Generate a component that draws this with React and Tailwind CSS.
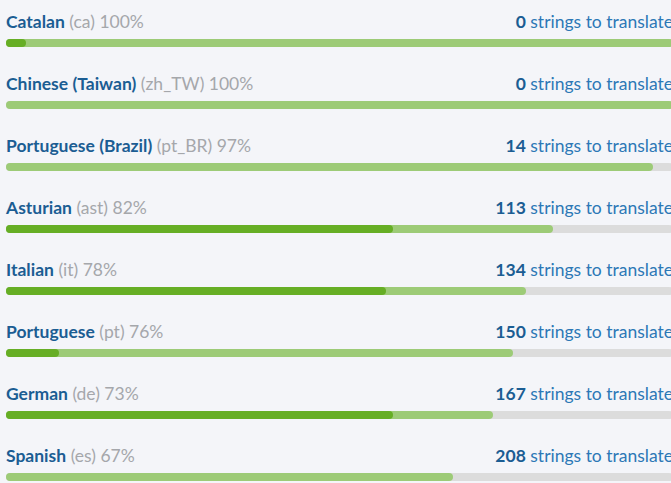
import React from "react";

const languages = [
  { name: "Catalan", code: "ca", percent: 100, left: 0, reviewed: 3 },
  { name: "Chinese (Taiwan)", code: "zh_TW", percent: 100, left: 0, reviewed: 0 },
  { name: "Portuguese (Brazil)", code: "pt_BR", percent: 97, left: 14, reviewed: 0 },
  { name: "Asturian", code: "ast", percent: 82, left: 113, reviewed: 58 },
  { name: "Italian", code: "it", percent: 78, left: 134, reviewed: 57 },
  { name: "Portuguese", code: "pt", percent: 76, left: 150, reviewed: 8 },
  { name: "German", code: "de", percent: 73, left: 167, reviewed: 58 },
  { name: "Spanish", code: "es", percent: 67, left: 208, reviewed: 0 },
];

const LanguageRow = ({ lang }) => {
  const innerWidth = lang.percent ? (lang.reviewed / lang.percent) * 100 : 0;
  return (
    <div className="pt-[10px] pb-[15px]">
      <div className="flex items-baseline justify-between text-[17.5px] leading-6">
        <div>
          <span className="font-bold text-[#1b5d93]">{lang.name}</span>{" "}
          <span className="text-[#a5a7ab]">
            ({lang.code}) {lang.percent}%
          </span>
        </div>
        <div className="text-[#2c78b6] whitespace-nowrap">
          <span className="font-bold text-[#1b5d93]">{lang.left}</span> strings to translate
        </div>
      </div>
      <div className="mt-[5px] h-2 rounded-sm bg-[#dcdcdc]">
        <div className="h-2 rounded-sm bg-[#9dcb77]" style={{ width: `${lang.percent}%` }}>
          {lang.reviewed > 0 && (
            <div className="h-2 rounded-sm bg-[#66ae25]" style={{ width: `${innerWidth}%` }} />
          )}
        </div>
      </div>
    </div>
  );
};

const App = () => {
  return (
    <div
      className="h-screen w-full overflow-hidden bg-[#f4f5f9]"
      style={{ fontFamily: "Lato, 'Open Sans', sans-serif" }}
    >
      <div className="ml-[6px] w-[667px]">
        {languages.map((lang) => (
          <LanguageRow key={lang.code} lang={lang} />
        ))}
      </div>
    </div>
  );
};

export default App;
